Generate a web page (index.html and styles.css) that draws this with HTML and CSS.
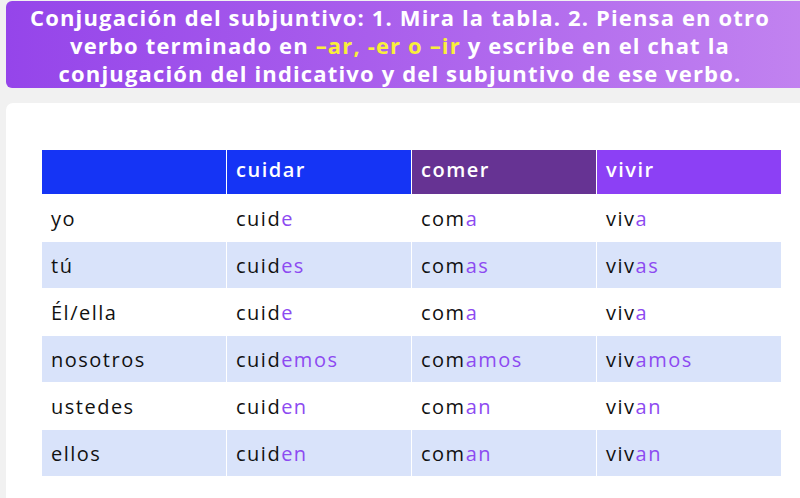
FILE: index.html
```html
<!DOCTYPE html>
<html lang="es">
<head>
<meta charset="utf-8">
<link rel="stylesheet" href="styles.css">
</head>
<body>
<div class="banner">
  <p class="title">Conjugación del subjuntivo: 1. Mira la tabla. 2. Piensa en otro<br>verbo terminado en <span class="hl">–ar, -er o –ir</span> y escribe en el chat la<br>conjugación del indicativo y del subjuntivo de ese verbo.</p>
</div>
<div class="card">
  <table class="conj">
    <thead>
      <tr>
        <th class="h-blank"></th>
        <th class="h-ar">cuidar</th>
        <th class="h-er">comer</th>
        <th class="h-ir">vivir</th>
      </tr>
    </thead>
    <tbody>
      <tr><td>yo</td><td>cuid<span class="end">e</span></td><td>com<span class="end">a</span></td><td>viv<span class="end">a</span></td></tr>
      <tr class="alt"><td>tú</td><td>cuid<span class="end">es</span></td><td>com<span class="end">as</span></td><td>viv<span class="end">as</span></td></tr>
      <tr><td>Él/ella</td><td>cuid<span class="end">e</span></td><td>com<span class="end">a</span></td><td>viv<span class="end">a</span></td></tr>
      <tr class="alt"><td>nosotros</td><td>cuid<span class="end">emos</span></td><td>com<span class="end">amos</span></td><td>viv<span class="end">amos</span></td></tr>
      <tr><td>ustedes</td><td>cuid<span class="end">en</span></td><td>com<span class="end">an</span></td><td>viv<span class="end">an</span></td></tr>
      <tr class="alt"><td>ellos</td><td>cuid<span class="end">en</span></td><td>com<span class="end">an</span></td><td>viv<span class="end">an</span></td></tr>
    </tbody>
  </table>
</div>
</body>
</html>
```
FILE: styles.css
```css
html, body {
  margin: 0;
  padding: 0;
}
body {
  background: #f1f1f1;
  overflow: hidden;
  height: 498px;
  font-family: "Open Sans", "Noto Sans", sans-serif;
}
.banner {
  margin: 1px -12px 0 6px;
  height: 87px;
  border-radius: 6px;
  background: linear-gradient(90deg, #9545ea 0%, #a95eec 45%, #c283f0 100%);
  display: flex;
  align-items: center;
  justify-content: center;
  padding-right: 18px;
}
.title {
  margin: 0;
  width: 780px;
  text-align: center;
  color: #fff;
  font-weight: 700;
  font-size: 22px;
  line-height: 28px;
  letter-spacing: 1.15px;
  white-space: nowrap;
}
.hl {
  color: #f9ef3b;
}
.card {
  margin: 15px -12px 0 6px;
  background: #fff;
  border-radius: 7px 7px 0 0;
  height: 348px;
  padding: 47px 0 0 36px;
}
.conj {
  border-collapse: separate;
  border-spacing: 0;
  width: 740px;
  table-layout: fixed;
  font-size: 20px;
  font-weight: 500;
  letter-spacing: 1.5px;
  color: #111;
}
.conj th, .conj td {
  text-align: left;
  padding: 0 0 0 9px;
  border-right: 1px solid #fff;
  border-bottom: 1px solid #fff;
  white-space: nowrap;
}
.conj th {
  height: 45px;
  color: #fff;
  font-weight: 600;
  vertical-align: top;
  padding-top: 6px;
  box-sizing: border-box;
}
.conj td {
  height: 46px;
  vertical-align: middle;
}
.h-blank, .h-ar { background: #1534f5; }
.h-er { background: #663393; }
.h-ir { background: #8c40f5; }
.alt td { background: #d9e3fa; }
.end { color: #8d4af1; }
```
